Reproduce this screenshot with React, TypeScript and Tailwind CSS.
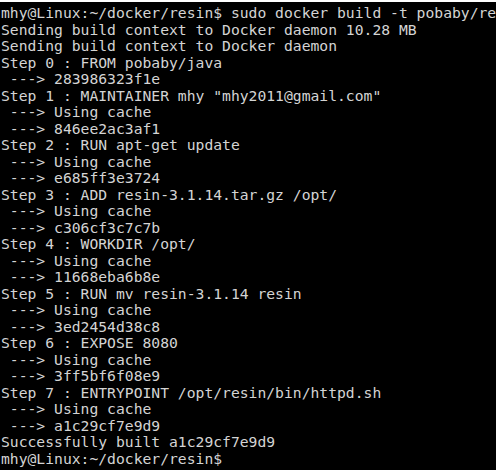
const lines = [
  "mhy@Linux:~/docker/resin$ sudo docker build -t pobaby/resin .",
  "Sending build context to Docker daemon 10.28 MB",
  "Sending build context to Docker daemon",
  "Step 0 : FROM pobaby/java",
  " ---> 283986323f1e",
  "Step 1 : MAINTAINER mhy \"mhy2011@gmail.com\"",
  " ---> Using cache",
  " ---> 846ee2ac3af1",
  "Step 2 : RUN apt-get update",
  " ---> Using cache",
  " ---> e685ff3e3724",
  "Step 3 : ADD resin-3.1.14.tar.gz /opt/",
  " ---> Using cache",
  " ---> c306cf3c7c7b",
  "Step 4 : WORKDIR /opt/",
  " ---> Using cache",
  " ---> 11668eba6b8e",
  "Step 5 : RUN mv resin-3.1.14 resin",
  " ---> Using cache",
  " ---> 3ed2454d38c8",
  "Step 6 : EXPOSE 8080",
  " ---> Using cache",
  " ---> 3ff5bf6f08e9",
  "Step 7 : ENTRYPOINT /opt/resin/bin/httpd.sh",
  " ---> Using cache",
  " ---> a1c29cf7e9d9",
  "Successfully built a1c29cf7e9d9",
  "mhy@Linux:~/docker/resin$",
];

export default function App() {
  return (
    <div className="w-[496px] h-[470px] bg-white pt-[2px] overflow-hidden">
      <div className="h-[468px] bg-black pt-[3px] pl-[1px] overflow-hidden font-['DejaVu_Sans_Mono',monospace] text-[14.7px] leading-[16.5px] text-[#d4d4d4]">
        {lines.map((line, i) => (
          <div key={i} className="whitespace-pre">
            {line}
          </div>
        ))}
      </div>
    </div>
  );
}
